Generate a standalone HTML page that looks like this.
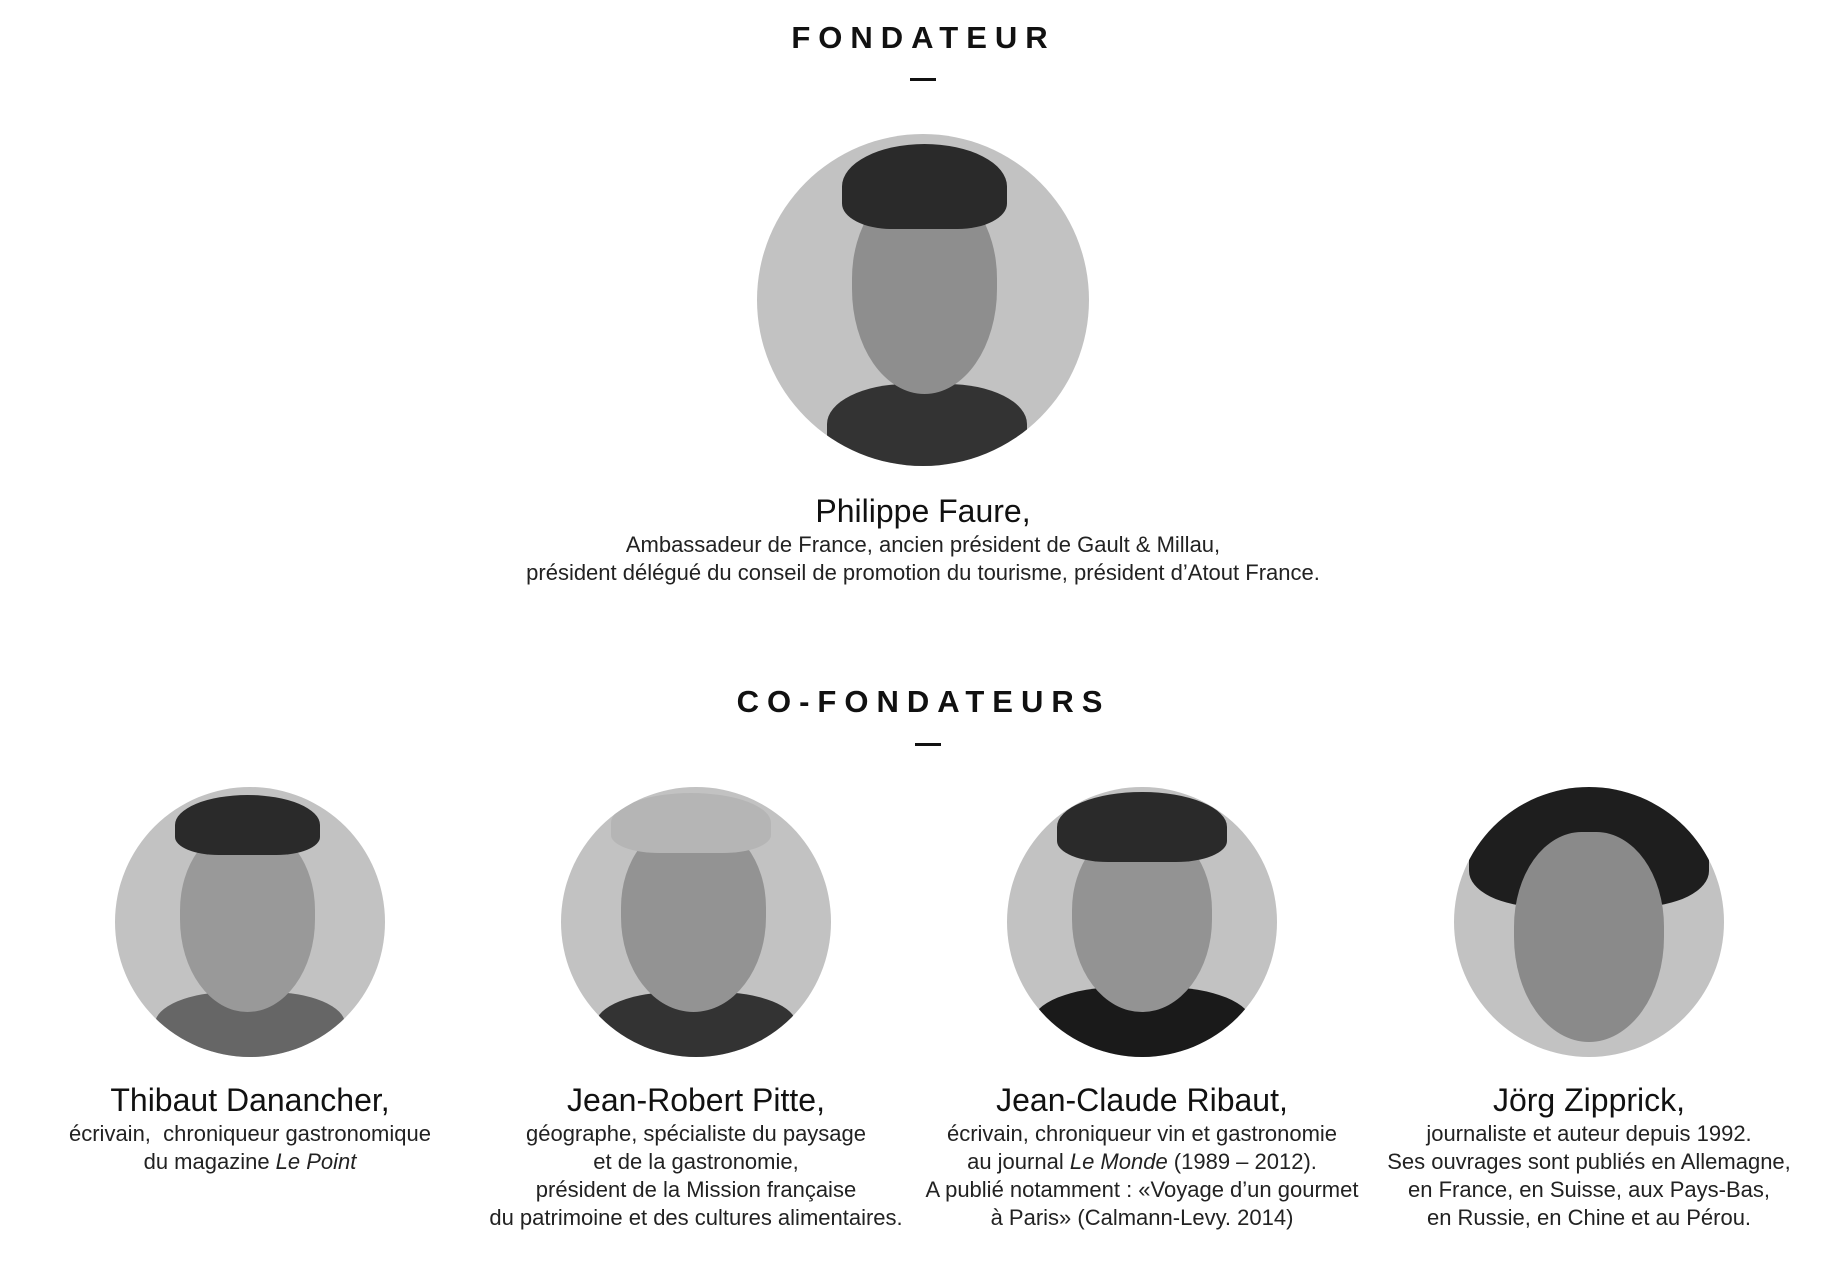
<!DOCTYPE html>
<html><head><meta charset="utf-8"><style>
html,body{margin:0;padding:0;background:#fff;width:1847px;height:1282px;overflow:hidden;font-family:"Liberation Sans",sans-serif;color:#111;}
.title{position:absolute;left:0;width:1847px;text-align:center;font-size:31px;font-weight:bold;letter-spacing:8px;}
.dash{position:absolute;width:26px;height:3px;background:#111;}
.circ{position:absolute;border-radius:50%;background:#c2c2c2;overflow:hidden;}
.face{position:absolute;border-radius:45% 45% 50% 50%;background:#8e8e8e;}
.hair{position:absolute;border-radius:50% 50% 30% 30%;background:#2a2a2a;}
.body{position:absolute;border-radius:40% 40% 0 0;background:#333;}
.blk{position:absolute;text-align:center;font-size:22px;line-height:28px;color:#222;}
.blk b{display:block;font-weight:normal;font-size:32px;line-height:36px;color:#111;margin-bottom:2px;}
</style></head><body>
<div class="title" style="top:20px">FONDATEUR</div>
<div class="dash" style="left:910px;top:78px"></div>
<div class="circ" style="left:757px;top:134px;width:332px;height:332px">
 <div class="body" style="left:70px;top:250px;width:200px;height:100px"></div>
 <div class="face" style="left:95px;top:50px;width:145px;height:210px"></div>
 <div class="hair" style="left:85px;top:10px;width:165px;height:85px"></div>
</div>
<div class="blk" style="left:400px;width:1046px;top:493px"><b>Philippe Faure,</b>Ambassadeur de France, ancien président de Gault &amp; Millau,<br>président délégué du conseil de promotion du tourisme, président d’Atout France.</div>
<div class="title" style="top:684px">CO-FONDATEURS</div>
<div class="dash" style="left:915px;top:743px"></div>

<div class="circ" style="left:115px;top:787px;width:270px;height:270px">
 <div class="body" style="left:40px;top:205px;width:190px;height:80px;background:#666"></div>
 <div class="face" style="left:65px;top:40px;width:135px;height:185px;background:#999"></div>
 <div class="hair" style="left:60px;top:8px;width:145px;height:60px"></div>
</div>
<div class="circ" style="left:561px;top:787px;width:270px;height:270px">
 <div class="body" style="left:35px;top:205px;width:200px;height:80px"></div>
 <div class="face" style="left:60px;top:35px;width:145px;height:190px;background:#939393"></div>
 <div class="hair" style="left:50px;top:6px;width:160px;height:60px;background:#b5b5b5"></div>
</div>
<div class="circ" style="left:1007px;top:787px;width:270px;height:270px">
 <div class="body" style="left:25px;top:200px;width:220px;height:90px;background:#1a1a1a"></div>
 <div class="face" style="left:65px;top:40px;width:140px;height:185px;background:#939393"></div>
 <div class="hair" style="left:50px;top:5px;width:170px;height:70px"></div>
</div>
<div class="circ" style="left:1454px;top:787px;width:270px;height:270px">
 <div class="hair" style="left:15px;top:0px;width:240px;height:120px;background:#1e1e1e"></div>
 <div class="face" style="left:60px;top:45px;width:150px;height:210px;background:#8a8a8a"></div>
</div>

<div class="blk" style="left:20px;width:460px;top:1082px"><b>Thibaut Danancher,</b>écrivain,&nbsp; chroniqueur gastronomique<br>du magazine <i>Le Point</i></div>
<div class="blk" style="left:461px;width:470px;top:1082px"><b>Jean-Robert Pitte,</b>géographe, spécialiste du paysage<br>et de la gastronomie,<br>président de la Mission française<br>du patrimoine et des cultures alimentaires.</div>
<div class="blk" style="left:907px;width:470px;top:1082px"><b>Jean-Claude Ribaut,</b>écrivain, chroniqueur vin et gastronomie<br>au journal <i>Le Monde</i> (1989 – 2012).<br>A publié notamment : «Voyage d’un gourmet<br>à Paris» (Calmann-Levy. 2014)</div>
<div class="blk" style="left:1364px;width:450px;top:1082px"><b>Jörg Zipprick,</b>journaliste et auteur depuis 1992.<br>Ses ouvrages sont publiés en Allemagne,<br>en France, en Suisse, aux Pays-Bas,<br>en Russie, en Chine et au Pérou.</div>
</body></html>
